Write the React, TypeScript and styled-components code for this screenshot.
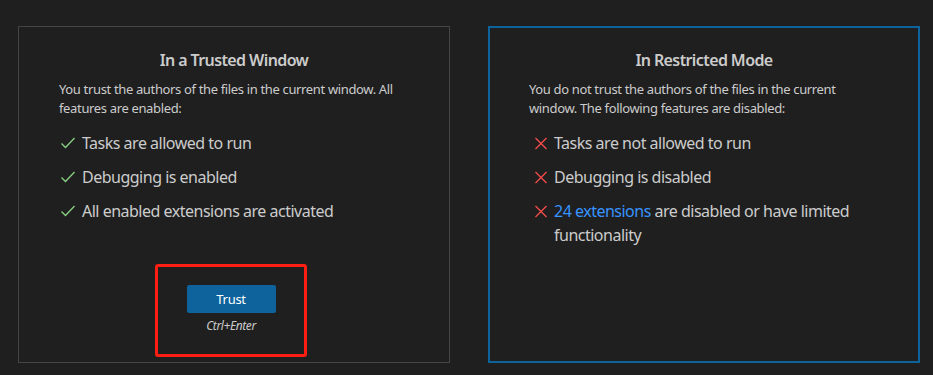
import type { ReactNode } from "react";
import styled, { createGlobalStyle } from "styled-components";

const GlobalStyle = createGlobalStyle`
  html, body {
    margin: 0;
    padding: 0;
    background-color: #1f1f1f;
  }
  body {
    font-family: "Segoe UI", "Noto Sans", "Open Sans", sans-serif;
    color: #cccccc;
  }
`;

const Page = styled.div`
  display: flex;
  gap: 38px;
  padding: 26px 0 0 18px;
  height: 375px;
  box-sizing: border-box;
`;

const Card = styled.div<{ $active?: boolean }>`
  width: 432px;
  height: 337px;
  box-sizing: border-box;
  display: flex;
  flex-direction: column;
  border: ${({ $active }) => ($active ? "2px solid #0e639c" : "1px solid #454545")};
  padding: ${({ $active }) => ($active ? "21px 39px 4px" : "22px 40px 5px")};
`;

const Title = styled.div`
  font-size: 16px;
  line-height: 22px;
  font-weight: 600;
  letter-spacing: -0.6px;
  text-align: center;
  color: #cccccc;
`;

const Desc = styled.div`
  margin-top: 9px;
  font-size: 13px;
  line-height: 19px;
  letter-spacing: -0.35px;
  color: #cccccc;
`;

const List = styled.div`
  margin-top: 13px;
  display: flex;
  flex-direction: column;
  gap: 10px;
`;

const Item = styled.div`
  display: flex;
  align-items: flex-start;
  font-size: 16px;
  line-height: 24px;
  letter-spacing: -0.5px;
  color: #cccccc;
`;

const IconBox = styled.span<{ $ok: boolean }>`
  flex: none;
  display: flex;
  align-items: center;
  height: 24px;
  margin-left: ${({ $ok }) => ($ok ? "1px" : "4px")};
  margin-right: ${({ $ok }) => ($ok ? "6px" : "5px")};
`;

const Link = styled.span`
  color: #3794ff;
`;

const Highlight = styled.div`
  margin: auto auto 0 96px;
  width: 152px;
  height: 93px;
  box-sizing: border-box;
  border: 3px solid #ff1e12;
  border-radius: 3px;
  display: flex;
  flex-direction: column;
  align-items: center;
  padding-top: 18px;
`;

const TrustButton = styled.button`
  width: 89px;
  height: 28px;
  border: none;
  border-radius: 2px;
  background-color: #0e639c;
  color: #ffffff;
  font-family: inherit;
  font-size: 13px;
  letter-spacing: -0.3px;
  cursor: pointer;
`;

const Shortcut = styled.div`
  margin-top: 5px;
  font-size: 12px;
  line-height: 16px;
  font-style: italic;
  letter-spacing: -0.4px;
  color: #cccccc;
`;

type Feature = { ok: boolean; text: ReactNode };

const trusted: Feature[] = [
  { ok: true, text: "Tasks are allowed to run" },
  { ok: true, text: "Debugging is enabled" },
  { ok: true, text: "All enabled extensions are activated" },
];

const restricted: Feature[] = [
  { ok: false, text: "Tasks are not allowed to run" },
  { ok: false, text: "Debugging is disabled" },
  {
    ok: false,
    text: (
      <>
        <Link>24 extensions</Link> are disabled or have limited functionality
      </>
    ),
  },
];

function CheckIcon() {
  return (
    <svg width="16" height="16" viewBox="0 0 16 16">
      <polyline
        points="1.5,8.5 5.5,12.5 14.5,3"
        fill="none"
        stroke="#89d185"
        strokeWidth="1.3"
      />
    </svg>
  );
}

function CloseIcon() {
  return (
    <svg width="16" height="16" viewBox="0 0 16 16">
      <path
        d="M2.5 3 L13.5 14 M13.5 3 L2.5 14"
        fill="none"
        stroke="#f14c4c"
        strokeWidth="1.4"
      />
    </svg>
  );
}

function FeatureList({ items }: { items: Feature[] }) {
  return (
    <List>
      {items.map((f, i) => (
        <Item key={i}>
          <IconBox $ok={f.ok}>{f.ok ? <CheckIcon /> : <CloseIcon />}</IconBox>
          <span>{f.text}</span>
        </Item>
      ))}
    </List>
  );
}

export default function App() {
  return (
    <>
      <GlobalStyle />
      <Page>
        <Card>
          <Title>In a Trusted Window</Title>
          <Desc>
            You trust the authors of the files in the current window. All
            features are enabled:
          </Desc>
          <FeatureList items={trusted} />
          <Highlight>
            <TrustButton>Trust</TrustButton>
            <Shortcut>Ctrl+Enter</Shortcut>
          </Highlight>
        </Card>
        <Card $active>
          <Title>In Restricted Mode</Title>
          <Desc>
            You do not trust the authors of the files in the current window.
            The following features are disabled:
          </Desc>
          <FeatureList items={restricted} />
        </Card>
      </Page>
    </>
  );
}
